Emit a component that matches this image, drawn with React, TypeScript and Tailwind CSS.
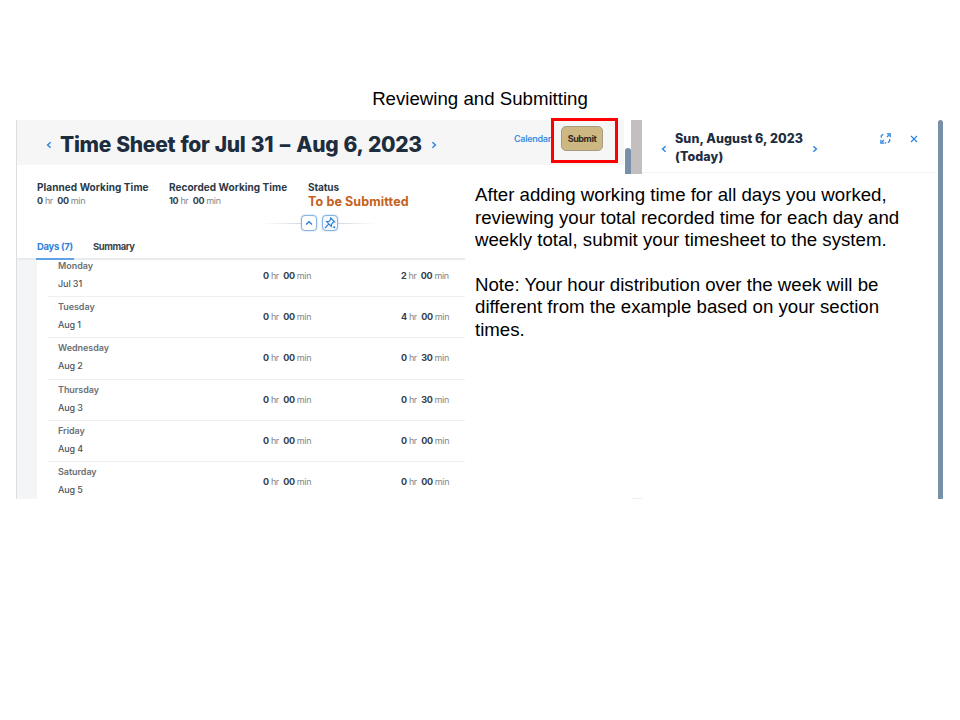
import React from "react";

const days = [
  { day: "Monday", date: "Jul 31", h: "2", m: "00" },
  { day: "Tuesday", date: "Aug 1", h: "4", m: "00" },
  { day: "Wednesday", date: "Aug 2", h: "0", m: "30" },
  { day: "Thursday", date: "Aug 3", h: "0", m: "30" },
  { day: "Friday", date: "Aug 4", h: "0", m: "00" },
  { day: "Saturday", date: "Aug 5", h: "0", m: "00" },
];

function Duration({ h, m }: { h: string; m: string }) {
  return (
    <span className="flex whitespace-pre text-[9px] leading-3 tracking-[-0.36px] text-[#7d8791]">
      <b className="font-bold text-[#33414e]">{h}</b>
      <span> hr  </span>
      <b className="font-bold text-[#33414e]">{m}</b>
      <span> min</span>
    </span>
  );
}

function Chevron({ d, className }: { d: string; className: string }) {
  return (
    <svg viewBox="0 0 6 8" fill="none" stroke="#2f86e0" strokeWidth="1.5" className={className}>
      <path d={d} />
    </svg>
  );
}
const LEFT = "M4.6 1.2 1.6 4l3 2.8";
const RIGHT = "M1.4 1.2 4.4 4l-3 2.8";

function Header() {
  return (
    <div className="flex h-[54px]">
      <div className="h-[54px] w-[608px] border-l border-[#dcdfe1]">
        <div className="flex h-[45px] bg-[#f6f6f6]">
          <Chevron d={LEFT} className="mt-[21px] ml-[29px] h-2 w-1.5 shrink-0" />
          <h2 className="mt-[10px] ml-[8px] w-[370px] shrink-0 text-[21px] leading-[30px] font-extrabold tracking-[-0.3px] [word-spacing:0.9px] whitespace-nowrap text-[#1d2d3e]">
            Time Sheet for Jul 31 <span className="mx-[1.3px]">–</span> Aug 6, 2023
          </h2>
          <Chevron d={RIGHT} className="mt-[21px] ml-px h-2 w-1.5 shrink-0" />
          <span className="mt-[13px] ml-[77px] w-[37px] shrink-0 text-[9px] leading-3 font-semibold tracking-[-0.3px] text-[#3d8fe2]">
            Calendar
          </span>
          <div className="-mt-[2px] flex h-[45px] w-[67px] shrink-0 items-start border-3 border-[#ff0000] bg-[#f6f6f6] pl-[7px]">
            <button className="mt-[5px] h-[25px] w-[42px] rounded-[5px] border border-[#a49b83] bg-[#cdb783] text-[9px] leading-3 font-bold tracking-[-0.4px] text-[#302b22]">
              Submit
            </button>
          </div>
        </div>
      </div>
      <div className="flex w-[7px] items-end pl-px">
        <div className="h-[26px] w-[6px] rounded-t-full bg-[#7890a8]" />
      </div>
      <div className="w-[11px] bg-[#c3bebf]" />
      <div className="flex h-[53px] w-[295px] border-b border-[#f3f3f3]">
        <Chevron d={LEFT} className="mt-[25px] ml-[19px] h-2 w-1.5 shrink-0" />
        <h3 className="mt-[10px] ml-[8px] w-[137px] shrink-0 text-[12.5px] leading-[17.5px] font-extrabold tracking-[0.1px] whitespace-nowrap text-[#1d2d3e]">
          Sun, August 6, 2023
          <br />
          (Today)
        </h3>
        <Chevron d={RIGHT} className="mt-[25px] h-2 w-1.5 shrink-0" />
        <svg viewBox="0 0 11 11" fill="none" stroke="#2f86e0" strokeWidth="1.3" className="mt-[13px] ml-[62px] h-[11px] w-[11px] shrink-0">
          <path d="M1.3 4.8V2.8L3.2 1.2M4.6 9.8h1.6M9.7 6v2L8 9.8M7 4 9.6 1.4M4 7 1.4 9.6" />
          <path d="M6.8.9h3.4v3.3M.9 6.8v3.4h3.3" />
        </svg>
        <svg viewBox="0 0 8 8" fill="none" stroke="#2f86e0" strokeWidth="1.2" className="mt-[15px] ml-[19px] h-2 w-2 shrink-0">
          <path d="m1 1 6 6M7 1 1 7" />
        </svg>
      </div>
    </div>
  );
}

function Facts() {
  return (
    <div className="flex h-[34px] pt-[7px] pl-[20px] text-[#2b3947]">
      <div className="w-[132px]">
        <p className="text-[10px] leading-[13px] font-bold tracking-[0.07px]">Planned Working Time</p>
        <div className="mt-px"><Duration h="0" m="00" /></div>
      </div>
      <div className="w-[139px]">
        <p className="text-[10px] leading-[13px] font-bold tracking-[0.04px]">Recorded Working Time</p>
        <div className="mt-px"><Duration h="10" m="00" /></div>
      </div>
      <div>
        <p className="text-[10px] leading-[13px] font-bold tracking-[-0.1px]">Status</p>
        <p className="text-[12.5px] leading-[15px] font-bold tracking-[0.13px] text-[#c3611b]">To be Submitted</p>
      </div>
    </div>
  );
}

function Tools() {
  return (
    <div className="flex h-[30px] items-center pl-[246px]">
      <div className="h-px w-[38px] bg-linear-to-r from-transparent to-[#d5d9dd]" />
      <div className="flex size-4 items-center justify-center rounded-[4px] border border-[#86b3e2] bg-white shadow-[0_0_2px_#a9c8e8]">
        <svg viewBox="0 0 8 6" fill="none" stroke="#2f7fd2" strokeWidth="1.4" className="h-1.5 w-2">
          <path d="M1 4.6 4 1.8l3 2.8" />
        </svg>
      </div>
      <div className="ml-[5px] flex size-4 items-center justify-center rounded-[4px] border border-[#86b3e2] bg-[#f3f9ff] shadow-[0_0_2px_#a9c8e8]">
        <svg viewBox="0 0 12 12" fill="none" stroke="#2f7fd2" strokeWidth="1.1" className="size-3 shrink-0">
          <path d="m6.7 1 4 4-1.5.3-1.7 2-.2 2.2L2.6 4.7l2.4-.3 1.6-1.8zM4.7 7.2 1 11" />
          <path d="M9.3 9.3h1.8v1.8H9.3z" fill="#2f7fd2" stroke="none" />
        </svg>
      </div>
      <div className="h-px w-[38px] bg-linear-to-l from-transparent to-[#d5d9dd]" />
    </div>
  );
}

function Tabs() {
  return (
    <div className="flex h-[22px] border-b-2 border-[#e9ecee] text-[9.5px] leading-3 font-bold">
      <div className="ml-[19px] h-[22px] w-[38px] border-b-2 border-[#5fa3e6] pt-[3px] pl-px tracking-[-0.3px] whitespace-nowrap text-[#2f82dc]">
        Days (7)
      </div>
      <div className="pt-[3px] pl-[19px] tracking-[-0.45px] text-[#3e444b]">Summary</div>
    </div>
  );
}

function DayList() {
  return (
    <div className="flex h-[239px] overflow-hidden">
      <div className="w-[20px] shrink-0 bg-[#f4f5f7]" />
      <div className="-mt-[4px] flex-1 pl-[11px]">
        {days.map((d) => (
          <div key={d.day} className="flex h-[41.2px] border-b border-[#efefef] pl-[10px]">
            <div className="w-[205px] pt-[4px] text-[9px] leading-3">
              <p className="font-semibold tracking-[-0.05px] text-[#6b6f73]">{d.day}</p>
              <p className="mt-[6px] font-medium tracking-[-0.1px] text-[#50555a]">{d.date}</p>
            </div>
            <div className="w-[138px] pt-[14px]"><Duration h="0" m="00" /></div>
            <div className="pt-[14px]"><Duration h={d.h} m={d.m} /></div>
          </div>
        ))}
      </div>
    </div>
  );
}

export default function App() {
  return (
    <main className="h-[720px] w-[960px] overflow-hidden bg-white pt-[87px] font-['Liberation_Sans',sans-serif]">
      <h1 className="h-[33px] pt-px text-center text-[18.67px] leading-[22.4px] text-black">Reviewing and Submitting</h1>
      <section className="ml-4 flex h-[379px] w-[928px]">
        <div className="w-[921px] font-['Inter',sans-serif]">
          <Header />
          <div className="flex">
            <div className="h-[325px] w-[449px] border-l border-[#dcdfe1]">
              <Facts />
              <Tools />
              <Tabs />
              <DayList />
            </div>
            <div className="pt-[10.2px] pl-[10px] font-['Liberation_Sans',sans-serif] text-[18.67px] leading-[22.4px] whitespace-nowrap text-black">
              <p>
                After adding working time for all days you worked,
                <br />
                reviewing your total recorded time for each day and
                <br />
                weekly total, submit your timesheet to the system.
              </p>
              <p className="mt-[22.4px]">
                Note: Your hour distribution over the week will be
                <br />
                different from the example based on your section
                <br />
                times.
              </p>
            </div>
          </div>
        </div>
        <div className="ml-[1px] w-[5px] rounded-t-full bg-[#7890a8]" />
      </section>
      <div className="-mt-px ml-[632px] h-px w-[10px] bg-[#efefef]" />
    </main>
  );
}
